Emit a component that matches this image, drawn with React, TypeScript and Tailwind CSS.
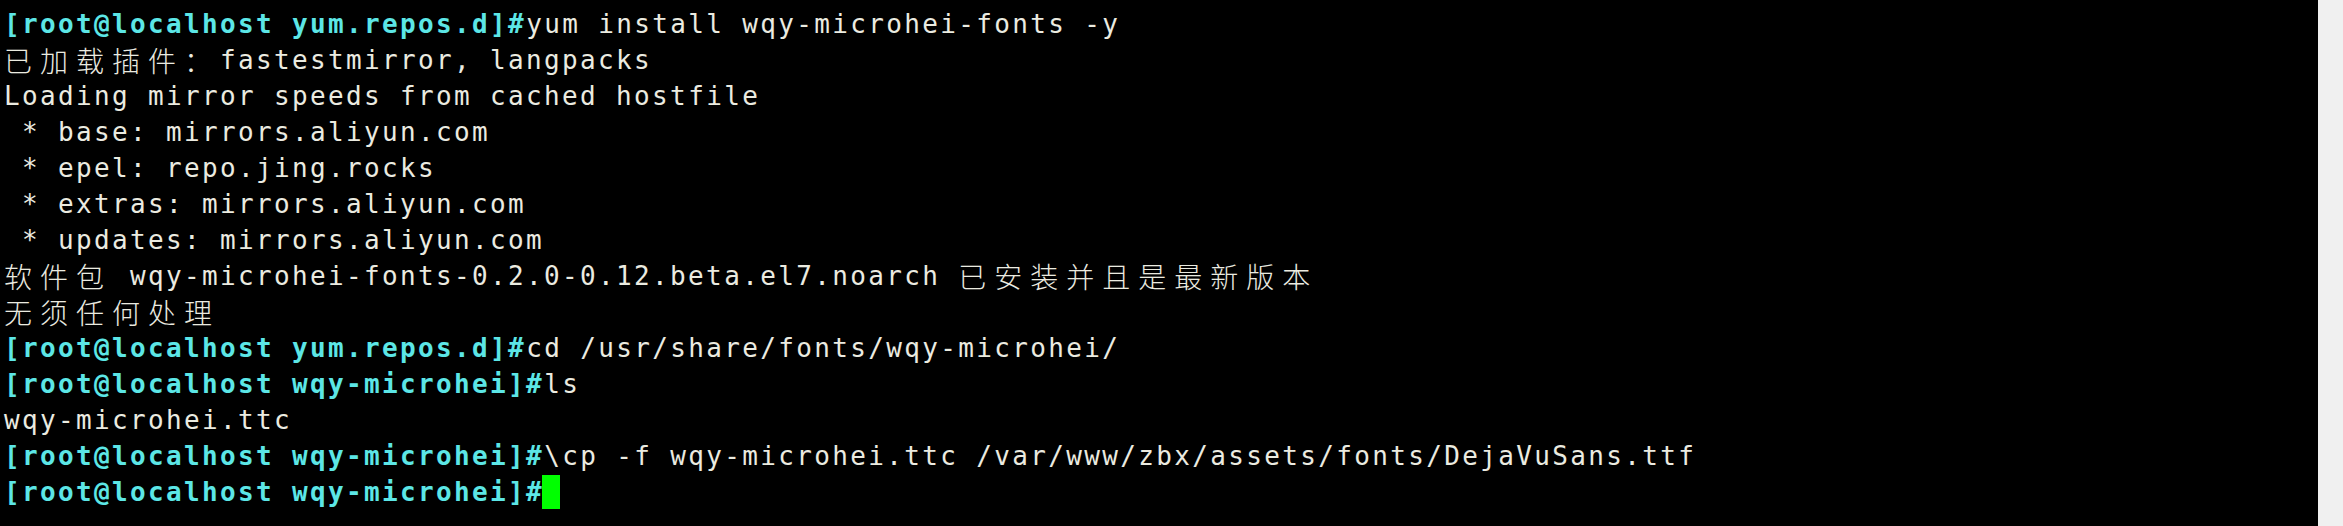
const cjk = "font-['Noto_Sans_CJK_SC',sans-serif] text-[28px] tracking-[8px] font-light leading-[36px]";

const Prompt = ({ dir }: { dir: string }) => (
    <span className="text-[#5ce6e6] font-bold">[root@localhost {dir}]#</span>
);

const Zh = ({ children }: { children: string }) => <span className={cjk}>{children}</span>;

const Row = ({ children }: { children: React.ReactNode }) => (
    <div className="h-[36px] flex items-center overflow-visible">{children}</div>
);

export default function App() {
    return (
        <div className="w-[2343px] h-[526px] flex bg-[#f0f0f0]">
            <div className="w-[2318px] h-full bg-black pl-[4px] pt-[6px] text-[#ebebe0] font-['DejaVu_Sans_Mono',monospace] text-[26px] leading-[36px] tracking-[2.35px] whitespace-pre">
                <Row><Prompt dir="yum.repos.d" />yum install wqy-microhei-fonts -y</Row>
                <Row><Zh>已加载插件：</Zh>fastestmirror, langpacks</Row>
                <Row>Loading mirror speeds from cached hostfile</Row>
                <Row> * base: mirrors.aliyun.com</Row>
                <Row> * epel: repo.jing.rocks</Row>
                <Row> * extras: mirrors.aliyun.com</Row>
                <Row> * updates: mirrors.aliyun.com</Row>
                <Row><Zh>软件包</Zh> wqy-microhei-fonts-0.2.0-0.12.beta.el7.noarch <Zh>已安装并且是最新版本</Zh></Row>
                <Row><Zh>无须任何处理</Zh></Row>
                <Row><Prompt dir="yum.repos.d" />cd /usr/share/fonts/wqy-microhei/</Row>
                <Row><Prompt dir="wqy-microhei" />ls</Row>
                <Row>wqy-microhei.ttc</Row>
                <Row><Prompt dir="wqy-microhei" />\cp -f wqy-microhei.ttc /var/www/zbx/assets/fonts/DejaVuSans.ttf</Row>
                <Row>
                    <Prompt dir="wqy-microhei" />
                    <span className="inline-block w-[18px] h-[34px] bg-[#00ff00] -ml-[2px]" />
                </Row>
            </div>
        </div>
    );
}
